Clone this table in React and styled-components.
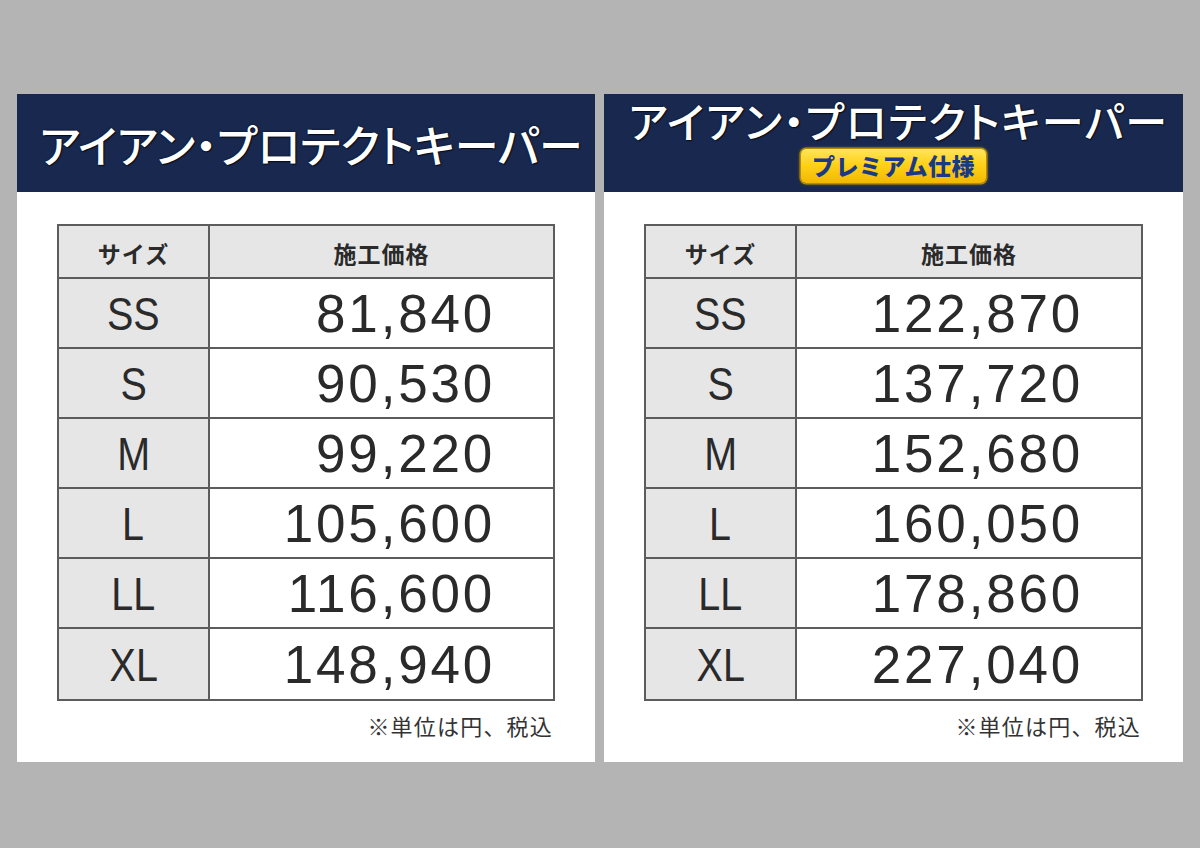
import React from "react";
import styled, { createGlobalStyle } from "styled-components";

const Global = createGlobalStyle`
  html, body { margin: 0; padding: 0; background: #b4b4b4; }
  body { width: 1200px; height: 848px; overflow: hidden; font-family: "Noto Sans CJK JP", "Noto Sans", sans-serif; }
  * { box-sizing: border-box; }
`;

const Page = styled.div`
  display: flex;
  gap: 9px;
  padding: 94px 0 0 17px;
  height: 848px;
`;

const Card = styled.section`
  width: ${(p) => p.$w}px;
  height: 668px;
  background: #ffffff;
  display: flex;
  flex-direction: column;
`;

const Header = styled.header`
  height: 98px;
  background: #18284f;
  display: flex;
  flex-direction: column;
  align-items: center;
  justify-content: center;
  padding-top: ${(p) => (p.$badge ? "0" : "2px")};
  padding-bottom: ${(p) => (p.$badge ? "4px" : "0")};
`;

const Title = styled.h1`
  margin: 0 0 0 10px;
  color: #ffffff;
  font-family: "Noto Sans CJK JP", sans-serif;
  font-weight: 500;
  font-size: ${(p) => p.$size}px;
  font-feature-settings: "palt";
  line-height: 1;
  letter-spacing: ${(p) => p.$ls}px;
  text-shadow: 0 0 2px rgba(0, 0, 0, 0.8), 1px 1px 1px rgba(0, 0, 0, 0.6);
  white-space: nowrap;
`;

const Badge = styled.div`
  margin-top: 8px;
  padding: 2px 11px 3px;
  border-radius: 5px;
  background: linear-gradient(180deg, #ffe55a 0%, #ffd21a 45%, #f2b800 100%);
  box-shadow: 0 0 0 1.5px #b88a00, 0 0 4px rgba(255, 210, 0, 0.6);
  color: #1b3a86;
  font-family: "Noto Sans CJK JP", sans-serif;
  font-weight: 900;
  font-size: 23px;
  line-height: 29px;
  letter-spacing: 0.5px;
  white-space: nowrap;
`;

const Body = styled.div`
  padding: 32px 40px 0;
  display: flex;
  flex-direction: column;
`;

const Table = styled.div`
  border: 2px solid #5c5c5c;
  display: flex;
  flex-direction: column;
`;

const Row = styled.div`
  display: flex;
  height: ${(p) => (p.$head ? 53 : 70)}px;
  border-bottom: ${(p) => (p.$last ? "none" : "2px solid #5c5c5c")};
`;

const SizeCell = styled.div`
  width: 151px;
  flex: none;
  background: #e6e6e6;
  border-right: 2px solid #5c5c5c;
  display: flex;
  align-items: center;
  justify-content: center;
`;

const PriceCell = styled.div`
  flex: 1;
  background: ${(p) => (p.$head ? "#e6e6e6" : "#ffffff")};
  display: flex;
  align-items: center;
  justify-content: ${(p) => (p.$head ? "center" : "flex-end")};
  padding-right: ${(p) => (p.$head ? "0" : "58px")};
`;

const HeadText = styled.span`
  font-family: "Noto Sans CJK JP", sans-serif;
  font-weight: 700;
  font-size: 23px;
  color: #2a2a2a;
  letter-spacing: 1px;
  padding-top: 2px;
`;

const SizeText = styled.span`
  display: inline-block;
  font-family: "Liberation Sans", Arial, sans-serif;
  font-size: 47px;
  color: #2a2a2a;
  transform: scaleX(0.84);
  line-height: 1;
`;

const PriceText = styled.span`
  font-family: "Liberation Sans", Arial, sans-serif;
  font-size: 53px;
  letter-spacing: 2.8px;
  color: #2a2a2a;
  line-height: 1;
`;

const Note = styled.p`
  margin: 12px 2px 0 0;
  text-align: right;
  font-family: "Noto Sans CJK JP", sans-serif;
  font-size: 22px;
  line-height: 24px;
  color: #333333;
  letter-spacing: 1.2px;
`;

const sizes = ["SS", "S", "M", "L", "LL", "XL"];

const PriceTable = ({ prices }) => (
  <Body>
    <Table>
      <Row $head>
        <SizeCell>
          <HeadText>サイズ</HeadText>
        </SizeCell>
        <PriceCell $head>
          <HeadText>施工価格</HeadText>
        </PriceCell>
      </Row>
      {sizes.map((s, i) => (
        <Row key={s} $last={i === sizes.length - 1}>
          <SizeCell>
            <SizeText>{s}</SizeText>
          </SizeCell>
          <PriceCell>
            <PriceText>{prices[i]}</PriceText>
          </PriceCell>
        </Row>
      ))}
    </Table>
    <Note>※単位は円、税込</Note>
  </Body>
);

export default function App() {
  return (
    <>
      <Global />
      <Page>
        <Card $w={578}>
          <Header>
            <Title $size={44} $ls={0}>アイアン・プロテクトキーパー</Title>
          </Header>
          <PriceTable
            prices={["81,840", "90,530", "99,220", "105,600", "116,600", "148,940"]}
          />
        </Card>
        <Card $w={579}>
          <Header $badge>
            <Title $size={42} $ls={1.5}>アイアン・プロテクトキーパー</Title>
            <Badge>プレミアム仕様</Badge>
          </Header>
          <PriceTable
            prices={["122,870", "137,720", "152,680", "160,050", "178,860", "227,040"]}
          />
        </Card>
      </Page>
    </>
  );
}
